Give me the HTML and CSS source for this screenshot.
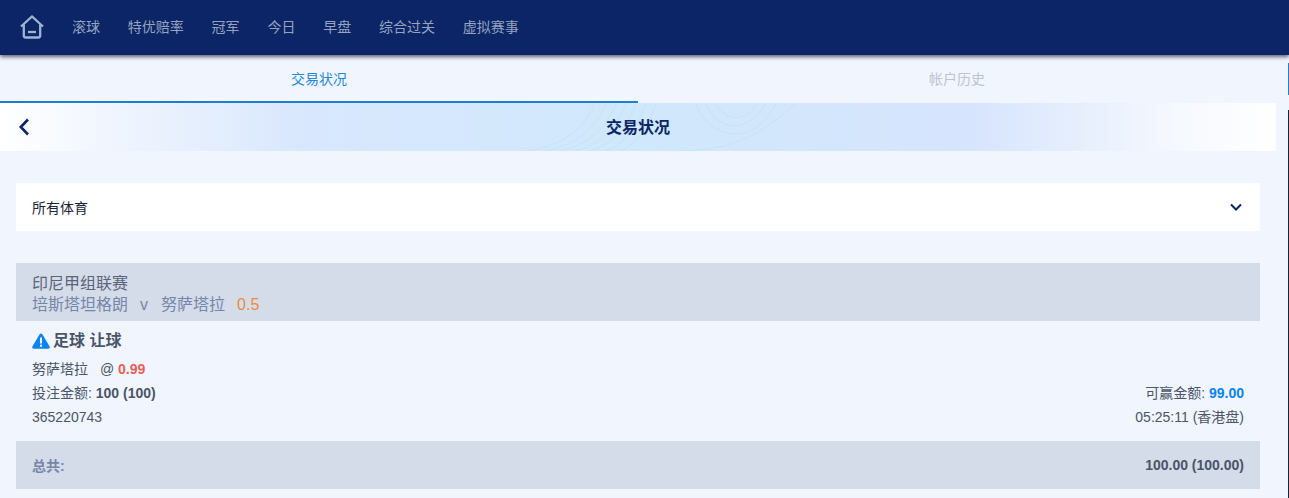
FILE: index.html
```html
<!DOCTYPE html>
<html lang="zh">
<head>
<meta charset="utf-8">
<title>交易状况</title>
<link rel="stylesheet" href="styles.css">
</head>
<body>
<header class="topbar">
  <svg class="home" width="24" height="24" viewBox="0 0 24 24" fill="none" stroke="#a3b3d2" stroke-width="2.300"><path d="M1 11.500 12 1.500l11 10"/><path d="M3.800 9.500V20.500a2 2 0 0 0 2 2h12.400a2 2 0 0 0 2-2V9.500"/><path d="M8 17h8"/></svg>
  <nav class="nav">
    <a>滚球</a><a>特优赔率</a><a>冠军</a><a>今日</a><a>早盘</a><a>综合过关</a><a>虚拟赛事</a>
  </nav>
</header>
<div class="tabs">
  <div class="tab active">交易状况</div>
  <div class="tab">帐户历史</div>
</div>
<div class="main">
  <div class="title-bar">
    <svg class="pattern" width="300" height="48" viewBox="0 0 300 48" fill="none" stroke="#b4dcea" stroke-width="1">
      <path d="M25 48C62 44 86 25 95 0"/><path d="M45 48C76 42 98 24 106 0"/><path d="M60 48C88 42 108 24 116 0"/><path d="M75 48C100 42 118 24 126 0"/><path d="M90 48C112 42 128 24 136 0"/><path d="M105 48C124 42 138 24 146 0"/><path d="M120 48C136 42 148 24 156 0"/>
      <path d="M215 0C222 12 232 16 240 14C248 12 254 6 257 0"/><path d="M205 0C214 20 230 26 244 21C254 17 262 8 266 0"/><path d="M195 0C206 28 232 36 250 28C262 22 272 10 276 0"/><path d="M185 48C214 46 250 44 296 0"/>
    </svg>
    <svg class="back" width="12" height="18" viewBox="0 0 12 18" fill="none" stroke="#0b2566" stroke-width="2.600"><path d="M10 1.500 2.800 9l7.200 7.500"/></svg>
    <h1>交易状况</h1>
  </div>
  <div class="content">
    <div class="select"><span>所有体育</span>
      <svg width="12" height="8" viewBox="0 0 12 8" fill="none" stroke="#0b2566" stroke-width="2"><path d="M1 1.500 6 6.500l5-5"/></svg>
    </div>
    <section class="league">
      <div class="league-name">印尼甲组联赛</div>
      <div class="match"><span>培斯塔坦格朗</span><span class="v">v</span><span>努萨塔拉</span><span class="hdp">0.5</span></div>
    </section>
    <section class="bet">
      <div class="bet-title">
        <svg width="18" height="16" viewBox="0 0 18 16"><path fill="#0a84f0" d="M9 0.500c.6 0 1.100.3 1.400.8l7.200 12.200c.6 1-.1 2.200-1.300 2.200H1.700C.5 15.700-.2 14.500.4 13.500L7.600 1.300C7.900.8 8.400.5 9 .5z"/><rect x="8" y="4.500" width="2" height="6" fill="#f1f5fe"/><rect x="8" y="11.700" width="2" height="2" fill="#f1f5fe"/></svg>
        <span>足球 让球</span>
      </div>
      <div class="line"><span>努萨塔拉 <span class="at">@</span> <b class="odds">0.99</b></span></div>
      <div class="line"><span>投注金额: <b>100 (100)</b></span><span>可赢金额: <b class="win">99.00</b></span></div>
      <div class="line"><span>365220743</span><span>05:25:11 (香港盘)</span></div>
    </section>
    <div class="total"><span class="total-label">总共:</span><b>100.00 (100.00)</b></div>
  </div>
</div>
<div class="edge"></div>
<div class="edge-dark"></div>
</body>
</html>
```
FILE: styles.css
```css
* { box-sizing: border-box; }
html, body { margin: 0; height: 498px; overflow: hidden; }
body { background: #f1f5fe; font-family: "Liberation Sans", "Noto Sans CJK SC", sans-serif; font-size: 14px; line-height: 16px; color: #4a5568; position: relative; }
.topbar { height: 55px; background: #0b2566; display: flex; align-items: center; padding: 0 0 2px 20px; box-shadow: 0 2px 4px rgba(20,20,50,.65); position: relative; }
.home { margin-top: 1px; }
.nav { display: flex; gap: 27.8px; margin-left: 28px; color: #96a4c0; }
.tabs { display: flex; height: 48px; width: 1276px; }
.tab { flex: 1; display: flex; align-items: center; justify-content: center; padding-top: 1px; color: #bcc3d1; border-bottom: 2px solid transparent; }
.tab.active { color: #2488d8; border-bottom-color: #1e7fd2; }
.main { width: 1276px; }
.title-bar { height: 48px; display: flex; align-items: center; justify-content: center; padding-top: 1px; position: relative; overflow: hidden; background: linear-gradient(90deg, #fff 0, #eef4fe 10%, #d8e7fd 24%, #d0e8fb 50%, #d6e4fd 76%, #f5f8fe 92%, #fff 100%); }
.pattern { position: absolute; left: 500px; top: 0; opacity: .35; }
.back { position: absolute; left: 18px; top: 15px; }
.title-bar h1 { margin: 0; font-size: 16px; font-weight: 700; color: #0b2566; position: relative; }
.content { padding: 32px 16px 0; }
.select { height: 48px; background: #fff; display: flex; align-items: center; justify-content: space-between; padding: 1px 18px 0 16px; color: #1a2238; }
.select svg { margin-top: -1px; }
.league { margin-top: 32px; height: 58px; background: #d4dbe9; padding: 10px 16px 0; font-size: 16px; line-height: 21px; }
.league-name { color: #5b6579; }
.match { display: flex; color: #7487a8; }
.v { margin: 0 13px 0 12px; }
.hdp { color: #ef8a3c; margin-left: 12px; }
.bet { padding: 9px 16px 0; height: 120px; }
.bet-title { display: flex; align-items: center; gap: 3px; font-size: 16px; font-weight: 700; height: 22px; margin-bottom: 5px; color: #4a5568; }
.line { display: flex; justify-content: space-between; height: 24px; align-items: center; }
.at { margin-left: 8px; }
.odds { color: #e4605a; }
.win { color: #0a84f0; }
.total { height: 48px; background: #d4dbe9; display: flex; align-items: center; justify-content: space-between; padding: 0 16px; }
.total-label { font-weight: 700; color: #7487a8; padding-top: 1px; }
.edge { position: absolute; right: 0; top: 63px; width: 1.500px; height: 32px; background: #1e7fd2; }
.edge-dark { position: absolute; right: 0; top: 110px; bottom: 0; width: 1.500px; background: #1a2238; }
```
